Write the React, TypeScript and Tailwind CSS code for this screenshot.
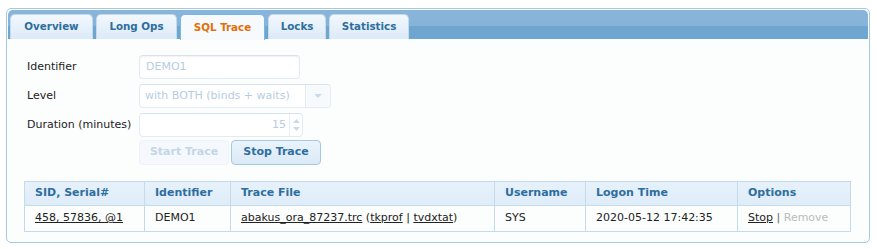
import React from "react";

const font = { fontFamily: '"DejaVu Sans", Verdana, sans-serif' };

function Tab({ label, active, w }: { label: string; active?: boolean; w: string }) {
  return (
    <div
      className={
        w +
        " h-[25px] flex items-center justify-center rounded-t-[5px] border border-b-0 text-[10.3px] font-bold " +
        (active
          ? "bg-[#f7fafc] border-[#79b7e7] text-[#e17009] h-[26px] -mb-[1px]"
          : "bg-[linear-gradient(#f2f8fd,#dbeaf7)] border-[#c5dbec] text-[#2e6e9e]")
      }
    >
      {label}
    </div>
  );
}

export default function App() {
  return (
    <div style={font} className="pl-[6px] pt-[8px] w-[877px] h-[249px] bg-white">
      <div className="w-[864px] h-[235px] border border-[#a6c9e2] rounded-[5px] bg-[#fcfdfd] p-[1px]">
        {/* header */}
        <div className="h-[29px] rounded-[5px] rounded-b-none bg-[linear-gradient(#88b5d9_0%,#86b4d8_55%,#6fa6cf_55%,#6fa6cf_100%)] pt-[4px] pl-[2px] flex gap-[3px] items-end">
          <Tab label="Overview" w="w-[83px]" />
          <Tab label="Long Ops" w="w-[81px]" />
          <Tab label="SQL Trace" w="w-[85px]" active />
          <Tab label="Locks" w="w-[58px]" />
          <Tab label="Statistics" w="w-[80px]" />
        </div>
        {/* form */}
        <div className="pt-[16px] pl-[19px] text-[11px] text-[#222]">
          <div className="flex items-center h-[24px]">
            <div className="w-[112px] pt-[1px]">Identifier</div>
            <div className="w-[161px] h-[24px] border border-[#e3ecf4] border-t-[#d8e2ea] rounded-[4px] bg-white flex items-center px-[6px] text-[#b6cde2] shadow-[inset_0_1px_2px_rgba(0,0,0,0.06)]">
              DEMO1
            </div>
          </div>
          <div className="flex items-center h-[24px] mt-[5px]">
            <div className="w-[112px] pt-[1px]">Level</div>
            <div className="w-[192px] h-[24px] border border-[#e3ecf4] border-t-[#d8e2ea] rounded-[4px] bg-white flex items-center text-[#b6cde2]">
              <div className="flex-1 px-[5px] whitespace-nowrap">with BOTH (binds + waits)</div>
              <div className="w-[25px] h-full border-l border-[#e3ecf4] bg-[#f6fafd] rounded-r-[4px] flex items-center justify-center">
                <svg width="8" height="5" viewBox="0 0 8 5">
                  <path d="M0 0 L8 0 L4 4 Z" fill="#c9dbea" />
                </svg>
              </div>
            </div>
          </div>
          <div className="flex items-center h-[24px] mt-[5px]">
            <div className="w-[112px] pt-[1px] whitespace-nowrap">Duration (minutes)</div>
            <div className="w-[164px] h-[24px] border border-[#e3ecf4] border-t-[#d8e2ea] rounded-[4px] bg-white flex items-center text-[#b6cde2]">
              <div className="flex-1 text-right pr-[3px]">15</div>
              <div className="w-[13px] h-full border-l border-[#e8eff5] flex flex-col items-center justify-center gap-[4px]">
                <svg width="7" height="4" viewBox="0 0 7 4">
                  <path d="M0 4 L7 4 L3.5 0 Z" fill="#c9dbea" />
                </svg>
                <svg width="7" height="4" viewBox="0 0 7 4">
                  <path d="M0 0 L7 0 L3.5 4 Z" fill="#c9dbea" />
                </svg>
              </div>
            </div>
          </div>
          <div className="flex items-center h-[25px] mt-[3px] pl-[112px] gap-[2px]">
            <div className="w-[90px] h-[25px] rounded-[4px] border border-[#ecf3f9] bg-[#f5f9fd] text-[#c2d6e7] font-bold flex items-center justify-center">
              Start Trace
            </div>
            <div className="w-[90px] h-[25px] rounded-[4px] border border-[#a6c9e2] bg-[linear-gradient(#eaf3fb,#dbeaf7)] text-[#2e6e9e] font-bold flex items-center justify-center">
              Stop Trace
            </div>
          </div>
        </div>
        {/* table */}
        <div className="ml-[16px] mt-[16px] w-[827px] text-[11px]">
          <div className="border border-[#c5dbec]">
            <div className="flex h-[24px] bg-[linear-gradient(#e6f1fa,#dfedf9)] text-[#2e6e9e] font-bold border-b border-[#c5dbec]">
              <div className="w-[120px] px-[10px] flex items-center border-r border-[#c5dbec]">SID, Serial#</div>
              <div className="w-[86px] px-[10px] flex items-center border-r border-[#c5dbec]">Identifier</div>
              <div className="w-[264px] px-[10px] flex items-center border-r border-[#c5dbec]">Trace File</div>
              <div className="w-[91px] px-[10px] flex items-center border-r border-[#c5dbec]">Username</div>
              <div className="w-[152px] px-[10px] flex items-center border-r border-[#c5dbec]">Logon Time</div>
              <div className="flex-1 px-[10px] flex items-center">Options</div>
            </div>
            <div className="flex h-[25px] bg-[#fcfdfd] text-[#222]">
              <div className="w-[120px] px-[10px] flex items-center border-r border-[#c5dbec] underline">458, 57836, @1</div>
              <div className="w-[86px] px-[10px] flex items-center border-r border-[#c5dbec]">DEMO1</div>
              <div className="w-[264px] px-[10px] flex items-center border-r border-[#c5dbec] whitespace-nowrap">
                <span className="underline">abakus_ora_87237.trc</span>&nbsp;(<span className="underline">tkprof</span>&nbsp;|&nbsp;<span className="underline">tvdxtat</span>)
              </div>
              <div className="w-[91px] px-[10px] flex items-center border-r border-[#c5dbec]">SYS</div>
              <div className="w-[152px] px-[10px] flex items-center border-r border-[#c5dbec]">2020-05-12 17:42:35</div>
              <div className="flex-1 px-[10px] flex items-center whitespace-nowrap">
                <span className="underline">Stop</span>&nbsp;<span className="text-[#666]">|</span>&nbsp;<span className="text-[#bbb]">Remove</span>
              </div>
            </div>
          </div>
        </div>
      </div>
    </div>
  );
}
